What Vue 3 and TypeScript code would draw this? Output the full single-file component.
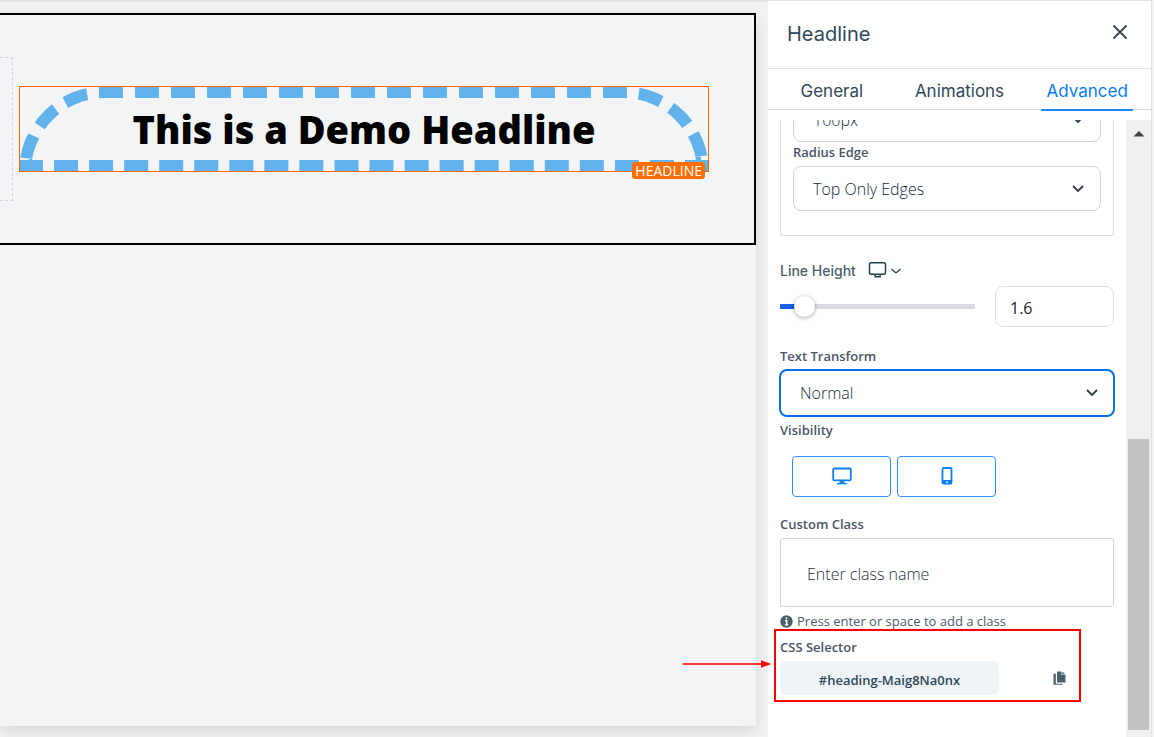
<script setup lang="ts">
import { ref } from 'vue'

const tabs = ['General', 'Animations', 'Advanced']
const activeTab = ref('Advanced')
const radius = ref('100px')
const radiusEdge = ref('Top Only Edges')
const lineHeight = ref('1.6')
const sliderValue = ref(8)
const textTransform = ref('Normal')
const customClass = ref('')
</script>

<template>
  <div class="editor">
    <main class="workspace">
      <div class="page">
        <section class="section">
          <div class="column"></div>
          <div class="headline">
            <h1>This is a Demo Headline</h1>
            <span class="badge">HEADLINE</span>
          </div>
        </section>
      </div>
    </main>

    <aside class="panel">
      <header class="panel-head">
        <h2>Headline</h2>
        <button class="close" type="button" aria-label="Close">
          <svg width="16" height="16" viewBox="0 0 16 16"><path d="M1.5 1.5l13 13M14.5 1.5l-13 13" /></svg>
        </button>
      </header>
      <nav class="tabs">
        <button
          v-for="tab in tabs"
          :key="tab"
          type="button"
          :class="{ active: tab === activeTab }"
          @click="activeTab = tab"
        >{{ tab }}</button>
      </nav>

      <div class="body">
        <div class="fields">
          <div class="group">
            <div class="select">
              <select v-model="radius" aria-label="Radius"><option>100px</option></select>
              <svg class="chevron" width="12" height="8" viewBox="0 0 12 8"><path d="M1 1l5 5 5-5" /></svg>
            </div>
            <label class="label" for="edge">Radius Edge</label>
            <div class="select spaced">
              <select id="edge" v-model="radiusEdge"><option>Top Only Edges</option></select>
              <svg class="chevron" width="12" height="8" viewBox="0 0 12 8"><path d="M1 1l5 5 5-5" /></svg>
            </div>
          </div>

          <div class="line-label">
            <label for="line">Line Height</label>
            <button type="button" aria-label="Choose device">
              <svg width="34" height="18" viewBox="0 0 34 18">
                <rect x="1.5" y="1.8" width="16" height="11.4" rx="1.5" />
                <path d="M7.2 13.5v2.3h5v-2.3" />
                <path class="thin" d="M23.5 8l4.5 4 4.5-4" />
              </svg>
            </button>
          </div>
          <div class="line-row">
            <input id="line" v-model="sliderValue" class="range" type="range" min="0" max="100" />
            <input v-model="lineHeight" class="number" type="text" aria-label="Line height value" />
          </div>

          <label class="label transform-label" for="transform">Text Transform</label>
          <div class="select focused">
            <select id="transform" v-model="textTransform"><option>Normal</option></select>
            <svg class="chevron" width="12" height="8" viewBox="0 0 12 8"><path d="M1 1l5 5 5-5" /></svg>
          </div>

          <span class="label visibility-label">Visibility</span>
          <div class="devices">
            <button type="button" aria-label="Desktop">
              <svg width="20" height="18" viewBox="0 0 20 18">
                <rect x="1.2" y="1.5" width="17.6" height="11.8" rx="1" />
                <path d="M10 13v3M7.5 15.2h5" />
                <path class="base" d="M4.8 16.7h10.4" />
              </svg>
            </button>
            <button type="button" aria-label="Mobile">
              <svg width="12" height="18" viewBox="0 0 12 18">
                <rect x="1.5" y="1" width="9" height="15.6" rx="1" />
                <path d="M1.5 14.8h9" class="thick" />
                <path d="M5.2 15.2h1.6" class="hole" />
              </svg>
            </button>
          </div>

          <label class="label class-label" for="class">Custom Class</label>
          <input id="class" v-model="customClass" class="class-input" type="text" placeholder="Enter class name" />
          <p class="hint">
            <svg width="13" height="13" viewBox="0 0 13 13">
              <circle cx="6.5" cy="6.5" r="6.2" />
              <path d="M6.5 2.5v1.8M5 5.7h1.7v4M4.9 9.8h3.4" />
            </svg>
            Press enter or space to add a class
          </p>

          <div class="selector">
            <span class="label">CSS Selector</span>
            <div class="selector-row">
              <code>#heading-Maig8Na0nx</code>
              <button type="button" aria-label="Copy selector">
                <svg width="13" height="14" viewBox="0 0 13 14">
                  <path d="M4 0.5h4.5v3.5h4v7.5H4zM9.3 0.5l3.2 3H9.3z" />
                  <path d="M0.5 2.8h2.3v10h6.8v0.9H0.5z" />
                </svg>
              </button>
            </div>
            <div class="callout"></div>
            <svg class="arrow" width="90" height="10" viewBox="0 0 90 10">
              <path d="M0.5 5h80" />
              <path class="tip" d="M79 1.3L89.5 5 79 8.7z" />
            </svg>
          </div>
        </div>
        <div class="scrollbar">
          <svg width="12" height="7" viewBox="0 0 12 7"><path d="M0.5 6.5L6 1l5.5 5.5z" /></svg>
          <div class="thumb"></div>
        </div>
      </div>
    </aside>
  </div>
</template>

<style>
body {
  margin: 0;
}
</style>

<style scoped>
.editor {
  display: grid;
  grid-template-columns: minmax(0, 1fr) 386px;
  min-height: 100vh;
  box-sizing: border-box;
  background: #f2f3f5;
  font-family: "Open Sans", "Noto Sans", sans-serif;
  color: #2f4858;
}
.editor *,
.editor *::before {
  box-sizing: border-box;
}
button {
  border: 0;
  padding: 0;
  background: none;
  cursor: pointer;
}
svg {
  display: block;
  fill: none;
  stroke: currentColor;
}
.workspace {
  display: flex;
  border-top: 2px solid #e1e2e4;
  padding: 11px 12px 11px 0;
  overflow: hidden;
}
.page {
  flex: 1;
  background: #f3f4f6;
  box-shadow: 0 5px 14px rgba(0, 0, 0, 0.13);
}
.section {
  display: flex;
  align-items: center;
  border: 2px solid #000;
  border-left: 0;
  padding: 42px 45px 42px 0;
}
.column {
  width: 13px;
  height: 144px;
  margin-right: 6px;
  border: 1px dashed #d3d4e8;
  border-left: 0;
}
.headline {
  position: relative;
  flex: 1;
}
.headline::before {
  content: "";
  position: absolute;
  inset: 0;
  border: 1px solid #ff6200;
}
h1 {
  margin: 0;
  border: 12px dashed #62b2ec;
  border-radius: 100px 100px 0 0;
  text-align: center;
  font-size: 38px;
  font-weight: 800;
  line-height: 62px;
  color: #000;
}
.badge {
  position: absolute;
  right: 4px;
  bottom: -7px;
  padding: 0 3px;
  border-radius: 3px;
  background: #ff6f00;
  color: #fff;
  font-size: 14px;
  line-height: 17px;
}
.panel {
  display: flex;
  flex-direction: column;
  border-top: 1px solid #dfe1e4;
  border-right: 1px solid #dfe1e4;
  margin-right: 2px;
  background: #fff;
}
.panel-head {
  display: flex;
  align-items: center;
  justify-content: space-between;
  height: 68px;
  padding: 0 23px 2px 19px;
  border-bottom: 1px solid #dee2e8;
}
h2 {
  margin: 0;
  font-family: Inter, sans-serif;
  font-size: 20px;
  font-weight: 400;
}
.close {
  padding-bottom: 4px;
}
.close svg {
  stroke-width: 1.8;
  color: #34495a;
}
.tabs {
  display: grid;
  grid-template-columns: repeat(3, 1fr);
  justify-items: center;
  height: 41px;
  border-bottom: 1px solid #d9dde2;
}
.tabs button {
  height: 42px;
  padding: 4px 5px 0;
  border-bottom: 2px solid transparent;
  font-family: Inter, sans-serif;
  font-size: 17px;
  color: #2f4858;
}
.tabs .active {
  border-color: #1a8cff;
  color: #0a7cff;
}
.body {
  display: flex;
  flex: 1;
  margin-top: 10px;
}
.fields {
  flex: 1;
  min-width: 0;
  padding: 0 12px;
}
.group {
  height: 116px;
  overflow: hidden;
  border: 1px solid #dcdfe6;
  border-top: 0;
  border-radius: 0 0 3px 3px;
  padding: 0 12px;
}
.group .select:first-child {
  margin-top: -23px;
}
.label {
  display: block;
  font-size: 13px;
  font-weight: 600;
  line-height: 20px;
  color: #4b5568;
}
.select {
  position: relative;
}
.select select {
  display: block;
  width: 100%;
  height: 45px;
  padding: 0 19px;
  appearance: none;
  border: 1px solid #cfd2dc;
  border-radius: 8px;
  background: #fff;
  font-family: inherit;
  font-size: 16px;
  font-weight: 300;
  color: #0f2c39;
}
.spaced {
  margin-top: 4px;
}
.chevron {
  position: absolute;
  right: 17px;
  top: 50%;
  margin-top: -4px;
  stroke-width: 1.8;
  color: #2d3a50;
  pointer-events: none;
}
.line-label {
  display: flex;
  align-items: center;
  gap: 12px;
  height: 24px;
  margin-top: 22px;
  font-family: Inter, sans-serif;
  font-size: 14px;
  font-weight: 500;
  color: #4a5f6c;
}
.line-label svg {
  stroke-width: 1.5;
  color: #23424f;
}
.line-label .thin {
  stroke-width: 1.2;
}
.line-row {
  display: flex;
  align-items: center;
  gap: 20px;
  margin-top: 4px;
}
.range {
  flex: 1;
  min-width: 0;
  height: 24px;
  margin: 0;
  appearance: none;
  border-radius: 3px;
  background: linear-gradient(to right, #155ff2 20px, #dadae1 20px) center / 100% 5px no-repeat;
}
.range::-webkit-slider-thumb {
  appearance: none;
  width: 21px;
  height: 21px;
  border-radius: 50%;
  background: #fff;
  box-shadow: 0 1px 4px rgba(0, 0, 0, 0.35);
}
.number {
  width: 119px;
  height: 41px;
  padding: 2px 14px 0;
  border: 1px solid #e0e1e6;
  border-radius: 8px;
  font-family: inherit;
  font-size: 16px;
  color: #1b1d22;
}
.transform-label {
  margin-top: 19px;
}
.focused {
  margin: 3px -1px 0;
}
.focused select {
  height: 48px;
  border: 2px solid #0670e8;
}
.visibility-label {
  margin-top: 3px;
}
.devices {
  display: flex;
  gap: 6px;
  margin: 16px 0 0 12px;
}
.devices button {
  display: grid;
  place-items: center;
  width: 99px;
  height: 41px;
  padding-bottom: 2px;
  border: 1px solid #2e90fa;
  border-radius: 4px;
  color: #0d80f5;
}
.devices svg {
  stroke-width: 1.8;
}
.devices .thick {
  stroke-width: 3.6;
}
.devices .base {
  stroke-width: 1.3;
}
.devices .hole {
  stroke: #fff;
  stroke-width: 1.6;
}
.class-label {
  margin-top: 17px;
}
.class-input {
  display: block;
  width: 100%;
  height: 69px;
  margin-top: 4px;
  padding: 2px 26px 0;
  border: 1px solid #cbd5e0;
  border-radius: 3px;
  font-family: inherit;
  font-size: 16px;
  font-weight: 300;
}
.class-input::placeholder {
  color: #263142;
}
.hint {
  display: flex;
  align-items: center;
  gap: 4px;
  margin: 4px 0 0;
  font-size: 13px;
  line-height: 20px;
  color: #48606c;
}
.hint circle {
  fill: #48606c;
  stroke: none;
}
.hint path {
  stroke: #fff;
  stroke-width: 1.5;
}
.selector {
  position: relative;
  margin-top: 6px;
}
.selector-row {
  display: flex;
  align-items: center;
  justify-content: space-between;
  margin-top: 4px;
  padding-right: 48px;
}
code {
  width: 219px;
  border-radius: 6px;
  background: #eff4f9;
  font-family: inherit;
  font-size: 13px;
  font-weight: 600;
  line-height: 34px;
  padding-top: 2px;
  height: 34px;
  text-align: center;
}
.selector-row svg {
  fill: #4b616c;
  stroke: none;
}
.callout {
  position: absolute;
  inset: -8px 33px -7px -6px;
  border: 2px solid #f00;
  pointer-events: none;
}
.arrow {
  position: absolute;
  left: -98px;
  top: 22px;
  stroke: #f00;
  stroke-width: 1.5;
}
.arrow .tip {
  fill: #f00;
  stroke: none;
}
.scrollbar {
  display: flex;
  flex-direction: column;
  align-items: center;
  width: 25px;
  padding: 10px 0 7px;
  background: #f0f0f0;
}
.scrollbar svg {
  fill: #404040;
  stroke: none;
}
.thumb {
  width: 21px;
  height: 291px;
  margin-top: auto;
  background: #c1c1c1;
}
</style>
